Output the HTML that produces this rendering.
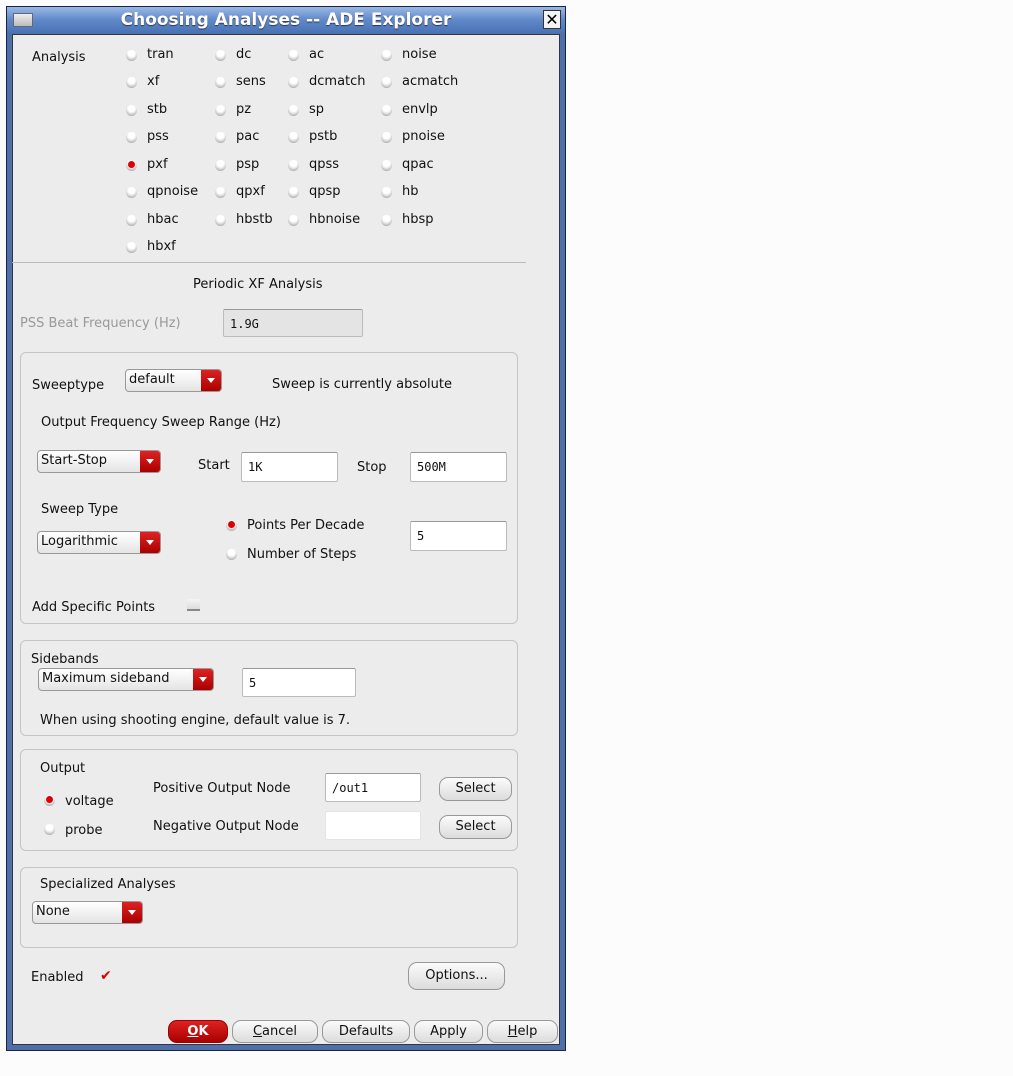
<!DOCTYPE html>
<html><head><meta charset="utf-8"><style>
*{box-sizing:border-box;margin:0;padding:0}
body{width:1013px;height:1076px;background:#fcfcfc;position:relative;overflow:hidden;font-family:"DejaVu Sans","Liberation Sans",sans-serif;font-size:13px;color:#111}
.a{position:absolute;white-space:nowrap;line-height:16px}
#win{position:absolute;left:6px;top:6px;width:560px;height:1045px;background:#4f6fa8;border:1px solid #1a2440}
#title{position:absolute;left:0;top:0;width:558px;height:26px;background:linear-gradient(#9ab8e6,#5f88c8 50%,#4a73b6);color:#fff;font-weight:bold;font-size:17px;text-align:center;line-height:26px;text-shadow:0 1px 1px #334}
#body{position:absolute;left:5px;top:27px;width:548px;height:1011px;background:#ececec;border:1px solid #334}
.r{position:absolute;width:11px;height:11px;border-radius:50%;background:radial-gradient(circle at 50% 30%,#fff 35%,#e0e0e0 55%,#888 100%)}
.r.on::after{content:"";position:absolute;left:2px;top:1px;width:7px;height:7px;border-radius:50%;background:#d00}
.box{position:absolute;border:1px solid #c4c4c4;border-radius:6px}
.inp{position:absolute;background:#fff;border:1px solid #bbb;border-top-color:#999;border-radius:2px;font-family:"DejaVu Sans Mono","Liberation Mono",monospace;font-size:12px;padding-left:6px}
.dd{position:absolute;height:23px;border:1px solid #999;border-radius:4px;background:linear-gradient(#fff,#e4e4e4);padding-left:3px;line-height:20px}
.dd b{position:absolute;right:0;top:0;width:20px;height:21px;background:linear-gradient(#d22,#a00);border-radius:0 3px 3px 0}
.dd b::after{content:"";position:absolute;left:6px;top:8px;border:4px solid transparent;border-top:5px solid #fff}
.btn{position:absolute;height:24px;border:1px solid #999;border-radius:9px;background:linear-gradient(#fbfbfb,#dcdcdc);text-align:center;line-height:22px}
</style></head><body>
<div id="win">
<div id="title"><span style="position:absolute;left:6px;top:6px;width:20px;height:14px;background:linear-gradient(#eee,#bbb);border:1px solid #667"></span>Choosing Analyses -- ADE Explorer<span style="position:absolute;right:4px;top:3px;width:18px;height:19px;background:#f4f4f4;border:1px solid #333;color:#000;font-size:16px;line-height:17px;text-shadow:none">✕</span></div>
<div id="body"></div>
</div>

<div class="a" style="left:32px;top:50px">Analysis</div>
<div class="r" style="left:126px;top:50px"></div><div class="a" style="left:147px;top:47px">tran</div>
<div class="r" style="left:215px;top:50px"></div><div class="a" style="left:236px;top:47px">dc</div>
<div class="r" style="left:288px;top:50px"></div><div class="a" style="left:309px;top:47px">ac</div>
<div class="r" style="left:381px;top:50px"></div><div class="a" style="left:402px;top:47px">noise</div>

<div class="r" style="left:126px;top:77px"></div><div class="a" style="left:147px;top:74px">xf</div>
<div class="r" style="left:215px;top:77px"></div><div class="a" style="left:236px;top:74px">sens</div>
<div class="r" style="left:288px;top:77px"></div><div class="a" style="left:309px;top:74px">dcmatch</div>
<div class="r" style="left:381px;top:77px"></div><div class="a" style="left:402px;top:74px">acmatch</div>

<div class="r" style="left:126px;top:105px"></div><div class="a" style="left:147px;top:102px">stb</div>
<div class="r" style="left:215px;top:105px"></div><div class="a" style="left:236px;top:102px">pz</div>
<div class="r" style="left:288px;top:105px"></div><div class="a" style="left:309px;top:102px">sp</div>
<div class="r" style="left:381px;top:105px"></div><div class="a" style="left:402px;top:102px">envlp</div>

<div class="r" style="left:126px;top:132px"></div><div class="a" style="left:147px;top:129px">pss</div>
<div class="r" style="left:215px;top:132px"></div><div class="a" style="left:236px;top:129px">pac</div>
<div class="r" style="left:288px;top:132px"></div><div class="a" style="left:309px;top:129px">pstb</div>
<div class="r" style="left:381px;top:132px"></div><div class="a" style="left:402px;top:129px">pnoise</div>

<div class="r on" style="left:126px;top:160px"></div><div class="a" style="left:147px;top:157px">pxf</div>
<div class="r" style="left:215px;top:160px"></div><div class="a" style="left:236px;top:157px">psp</div>
<div class="r" style="left:288px;top:160px"></div><div class="a" style="left:309px;top:157px">qpss</div>
<div class="r" style="left:381px;top:160px"></div><div class="a" style="left:402px;top:157px">qpac</div>

<div class="r" style="left:126px;top:187px"></div><div class="a" style="left:147px;top:184px">qpnoise</div>
<div class="r" style="left:215px;top:187px"></div><div class="a" style="left:236px;top:184px">qpxf</div>
<div class="r" style="left:288px;top:187px"></div><div class="a" style="left:309px;top:184px">qpsp</div>
<div class="r" style="left:381px;top:187px"></div><div class="a" style="left:402px;top:184px">hb</div>

<div class="r" style="left:126px;top:215px"></div><div class="a" style="left:147px;top:212px">hbac</div>
<div class="r" style="left:215px;top:215px"></div><div class="a" style="left:236px;top:212px">hbstb</div>
<div class="r" style="left:288px;top:215px"></div><div class="a" style="left:309px;top:212px">hbnoise</div>
<div class="r" style="left:381px;top:215px"></div><div class="a" style="left:402px;top:212px">hbsp</div>

<div class="r" style="left:126px;top:242px"></div><div class="a" style="left:147px;top:239px">hbxf</div>

<div style="position:absolute;left:12px;top:262px;width:514px;height:1px;background:#bbb"></div>
<div class="a" style="left:193px;top:277px">Periodic XF Analysis</div>
<div class="a" style="left:20px;top:316px;color:#999">PSS Beat Frequency (Hz)</div>
<div class="inp" style="left:223px;top:309px;width:140px;height:28px;background:#e4e4e4;line-height:28px">1.9G</div>

<div class="box" style="left:20px;top:352px;width:498px;height:272px"></div>
<div class="a" style="left:32px;top:378px">Sweeptype</div>
<div class="dd" style="left:125px;top:369px;width:97px">default<b></b></div>
<div class="a" style="left:272px;top:377px">Sweep is currently absolute</div>
<div class="a" style="left:41px;top:415px">Output Frequency Sweep Range (Hz)</div>
<div class="dd" style="left:37px;top:450px;width:124px">Start-Stop<b></b></div>
<div class="a" style="left:198px;top:458px">Start</div>
<div class="inp" style="left:241px;top:452px;width:97px;height:30px;line-height:28px">1K</div>
<div class="a" style="left:357px;top:460px">Stop</div>
<div class="inp" style="left:410px;top:452px;width:97px;height:30px;line-height:28px">500M</div>
<div class="a" style="left:41px;top:502px">Sweep Type</div>
<div class="dd" style="left:37px;top:531px;width:124px">Logarithmic<b></b></div>
<div class="r on" style="left:226px;top:520px"></div><div class="a" style="left:247px;top:518px">Points Per Decade</div>
<div class="r" style="left:226px;top:549px"></div><div class="a" style="left:247px;top:547px">Number of Steps</div>
<div class="inp" style="left:410px;top:521px;width:97px;height:30px;line-height:28px">5</div>
<div class="a" style="left:32px;top:600px">Add Specific Points</div>
<div style="position:absolute;left:187px;top:599px;width:13px;height:12px;border-bottom:2px solid #888;background:linear-gradient(#f4f4f4,#ddd)"></div>

<div class="box" style="left:20px;top:640px;width:498px;height:96px"></div>
<div class="a" style="left:31px;top:652px">Sidebands</div>
<div class="dd" style="left:38px;top:668px;width:176px">Maximum sideband<b></b></div>
<div class="inp" style="left:242px;top:668px;width:114px;height:29px;line-height:28px">5</div>
<div class="a" style="left:40px;top:713px">When using shooting engine, default value is 7.</div>

<div class="box" style="left:20px;top:749px;width:498px;height:102px"></div>
<div class="a" style="left:40px;top:761px">Output</div>
<div class="r on" style="left:44px;top:795px"></div><div class="a" style="left:65px;top:794px">voltage</div>
<div class="r" style="left:44px;top:824px"></div><div class="a" style="left:65px;top:823px">probe</div>
<div class="a" style="left:153px;top:781px">Positive Output Node</div>
<div class="a" style="left:153px;top:819px">Negative Output Node</div>
<div class="inp" style="left:325px;top:773px;width:96px;height:29px;line-height:28px">/out1</div>
<div class="inp" style="left:325px;top:811px;width:96px;height:29px;border-color:#e4e4e4"></div>
<div class="btn" style="left:439px;top:777px;width:73px">Select</div>
<div class="btn" style="left:439px;top:815px;width:73px">Select</div>

<div class="box" style="left:20px;top:867px;width:498px;height:81px"></div>
<div class="a" style="left:40px;top:877px">Specialized Analyses</div>
<div class="dd" style="left:32px;top:901px;width:111px">None<b></b></div>

<div class="a" style="left:31px;top:970px">Enabled</div>
<div class="a" style="left:100px;top:968px;color:#d00;font-size:14px;font-weight:bold">✔</div>
<div class="btn" style="left:408px;top:962px;width:97px;height:28px;line-height:26px">Options...</div>

<div class="btn" style="left:168px;top:1020px;width:60px;height:23px;background:linear-gradient(#d22,#a00);border-color:#900;color:#fff;font-weight:bold;line-height:21px"><u>O</u>K</div>
<div class="btn" style="left:232px;top:1020px;width:86px;height:23px;line-height:21px"><u>C</u>ancel</div>
<div class="btn" style="left:322px;top:1020px;width:88px;height:23px;line-height:21px">Defaults</div>
<div class="btn" style="left:414px;top:1020px;width:69px;height:23px;line-height:21px">Apply</div>
<div class="btn" style="left:487px;top:1020px;width:71px;height:23px;line-height:21px"><u>H</u>elp</div>
</body></html>
